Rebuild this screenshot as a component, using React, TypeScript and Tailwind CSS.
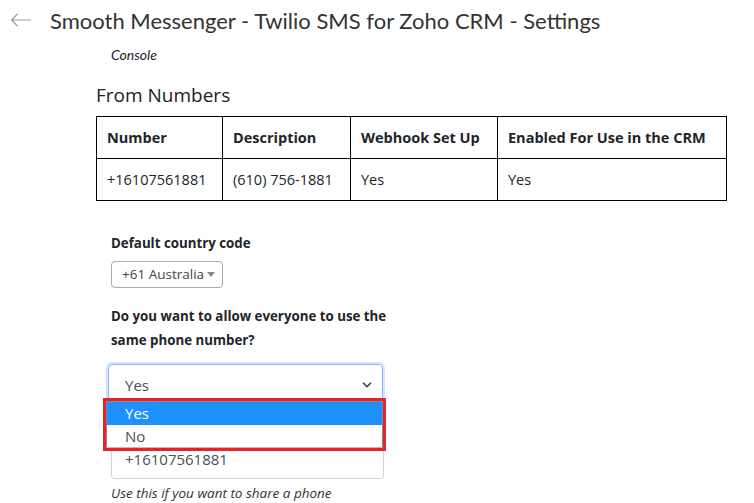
import { ChevronDown } from "lucide-react";

const cols = [
  { head: "Number", cell: "+16107561881", w: "w-[126px]" },
  { head: "Description", cell: "(610) 756-1881", w: "w-[128px]" },
  { head: "Webhook Set Up", cell: "Yes", w: "w-[147px]" },
  { head: "Enabled For Use in the CRM", cell: "Yes", w: "" },
];

export default function App() {
  return (
    <div className="h-[503px] w-[754px] overflow-hidden bg-white text-[#212529] [font-family:'Segoe_UI','Open_Sans',sans-serif]">
      {/* header */}
      <div className="flex h-[40px] items-center pl-[10px]">
        <svg width="22" height="14" viewBox="0 0 22 14" className="text-[#9a9a9a]">
          <path d="M21 7H1.5M7.5 1L1.5 7l6 6" fill="none" stroke="currentColor" strokeWidth="1.2" />
        </svg>
        <h1 className="ml-[18px] text-[22px] text-[#333] [font-family:Lato,sans-serif]">
          Smooth Messenger - Twilio SMS for Zoho CRM - Settings
        </h1>
      </div>

      <div className="pl-[111px] pt-[6px] text-[14px] italic leading-[18px] [font-family:Lato,sans-serif]">
        Console
      </div>

      <div className="ml-[96px] w-[631px]">
        <h2 className="mt-[19px] text-[19px] leading-[24px] text-[#222]">From Numbers</h2>

        <table className="mt-[9px] w-full border-collapse border border-black text-[14.5px]">
          <thead>
            <tr>
              {cols.map((c) => (
                <th
                  key={c.head}
                  className={`h-[42px] border border-black px-[10px] text-left font-bold ${c.w}`}
                >
                  {c.head}
                </th>
              ))}
            </tr>
          </thead>
          <tbody>
            <tr>
              {cols.map((c) => (
                <td key={c.head} className="h-[42px] border border-black px-[10px]">
                  {c.cell}
                </td>
              ))}
            </tr>
          </tbody>
        </table>
      </div>

      <div className="ml-[111px] w-[285px] text-[13.3px]">
        <div className="mt-[34px] font-bold leading-[16px]">Default country code</div>

        <div className="mt-[10px] flex h-[27px] w-[112px] items-center justify-between rounded-[4px] border border-[#aaa] pl-[10px] pr-[7px] text-[13.5px] text-[#444]">
          <span>+61 Australia</span>
          <svg width="8" height="5" viewBox="0 0 8 5">
            <path d="M0 0h8L4 5z" fill="#888" />
          </svg>
        </div>

        <div className="mt-[16px] font-bold leading-[24px]">
          Do you want to allow everyone to use the same phone number?
        </div>
      </div>

      <div className="relative ml-[108px] mt-[12px] w-[275px]">
        <div className="flex h-[42px] items-center justify-between rounded-[4px] border border-[#86b7fe] pl-[16px] pr-[8px] text-[15px] text-[#495057] shadow-[0_0_0_2px_rgba(13,110,253,0.18)]">
          <span>Yes</span>
          <ChevronDown size={14} strokeWidth={3} className="text-[#444]" />
        </div>

        <div className="ml-[3px] mt-[35px] flex h-[38px] w-[273px] items-center rounded-b-[4px] border border-t-0 border-[#ced4da] pl-[13px] text-[15px] text-[#495057]">
          +16107561881
        </div>
        <div className="mt-[4px] pl-[3px] text-[13.5px] italic text-[#333]">
          Use this if you want to share a phone
        </div>

        {/* open dropdown list */}
        <div className="absolute left-[-5px] top-[34px] w-[283px] border-[3px] border-[#e8222d] bg-white">
          <div className="border border-[#888] border-b-[#bbb] text-[15px]">
            <div className="flex h-[23px] items-center bg-[#1e90ff] pl-[18px] text-white">Yes</div>
            <div className="flex h-[22px] items-center pl-[18px] text-[#495057]">No</div>
          </div>
        </div>
      </div>
    </div>
  );
}
